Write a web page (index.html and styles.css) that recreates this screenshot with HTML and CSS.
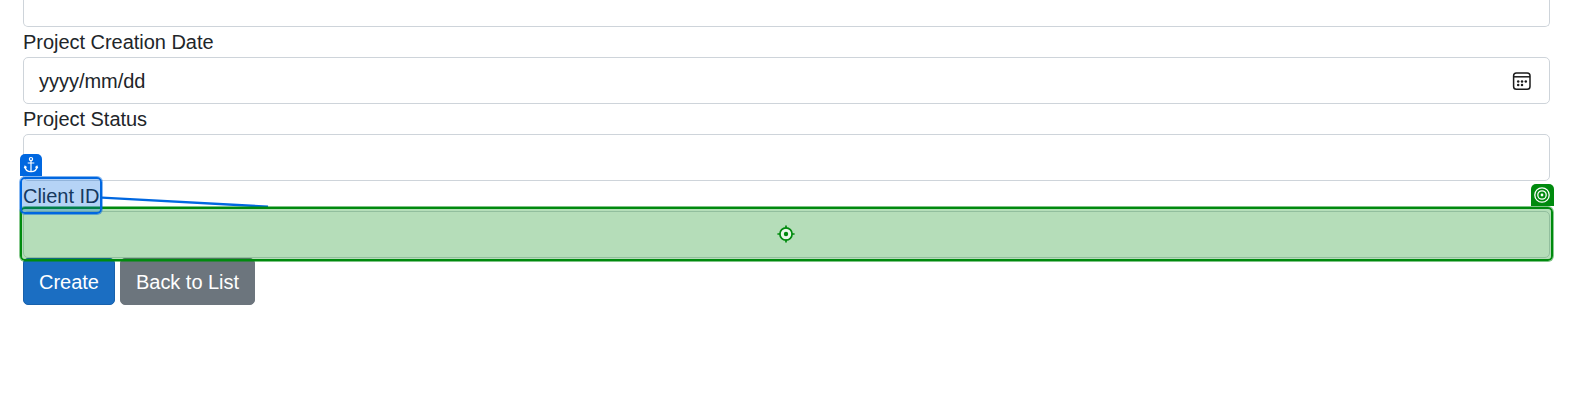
FILE: index.html
```html
<!DOCTYPE html>
<html lang="en">
<head>
<meta charset="utf-8">
<title>Create Project</title>
<link rel="stylesheet" href="styles.css">
</head>
<body>
<form class="form">
  <div class="control control-first"></div>
  <div class="label">Project Creation Date</div>
  <div class="control date">
    <span>yyyy/mm/dd</span>
    <svg class="calendar" width="20" height="20" viewBox="0 0 20 20" fill="none" stroke="#1b1b1b" stroke-width="1.5"><rect x="1.6" y="1.9" width="16.4" height="16.4" rx="2.8"/><path d="M1.6 5.8h16.4"/><g fill="#1b1b1b" stroke="none"><circle cx="6.2" cy="10.4" r="1.25"/><circle cx="10" cy="10.4" r="1.25"/><circle cx="13.8" cy="10.4" r="1.25"/><circle cx="6.2" cy="14" r="1.25"/><circle cx="10" cy="14" r="1.25"/></g></svg>
  </div>
  <div class="label">Project Status</div>
  <div class="control"></div>
  <div class="label">Client ID</div>
  <div class="control"></div>
  <div class="actions">
    <span class="btn primary">Create</span>
    <span class="btn secondary">Back to List</span>
  </div>
</form>
<svg class="connector" width="190" height="20" viewBox="90 190 190 20"><path d="M102 197.6L268 206.6" stroke="#0067e0" stroke-width="2.4"/></svg>
<div class="target">
  <svg class="crosshair" width="18" height="18" viewBox="0 0 18 18" fill="none" stroke="#008a0e" stroke-width="1.7"><circle cx="9" cy="9" r="6.1" fill="#e8f6e8"/><circle cx="9" cy="9" r="2.2" fill="#008a0e" stroke="none"/><path d="M9 .4v3M9 14.6v3M.4 9h3M14.6 9h3"/></svg>
</div>
<div class="anchor"></div>
<div class="badge anchor-badge">
  <svg width="16" height="18" viewBox="0 0 16 18" fill="none" stroke="#fff" stroke-width="1.2"><circle cx="8" cy="3.1" r="1.6"/><path d="M8 4.7v11M4.7 7h6.6M2 10.4c.2 3.1 2.6 5.3 6 5.3s5.8-2.2 6-5.3M1.3 12.2l.7-1.9 1.6 1.2M14.7 12.2l-.7-1.9-1.6 1.2"/></svg>
</div>
<div class="badge target-badge">
  <svg width="18" height="18" viewBox="0 0 18 18" fill="none" stroke="#fff" stroke-width="1.3"><circle cx="9" cy="9" r="7.2"/><circle cx="9" cy="9" r="4.2"/><circle cx="9" cy="9" r="1.4" fill="#fff" stroke="none"/></svg>
</div>
</body>
</html>
```
FILE: styles.css
```css
* { box-sizing: border-box; }
body {
  margin: 0;
  height: 419px;
  position: relative;
  overflow: hidden;
  background: #fff;
  color: #212529;
  font: 20px/30px "Liberation Sans", Arial, sans-serif;
  letter-spacing: -.03px;
}
.form { padding: 0 23px; }
.control {
  height: 47px;
  border: 1px solid #ced4da;
  border-radius: 5px;
  background: #fff;
}
.control-first { height: 27px; border-top: 0; border-radius: 0 0 5px 5px; }
.label { height: 30px; }
.date {
  display: flex;
  align-items: center;
  justify-content: space-between;
  padding: 0 17px 0 15px;
}
.calendar { display: block; }
.actions { display: flex; gap: 5px; }
.btn {
  height: 47px;
  padding: 8px 0;
  border: 1px solid #1861ac;
  border-radius: 5px;
  color: #fff;
  text-align: center;
  white-space: nowrap;
}
.primary { width: 92px; background: #1b6ec2; }
.secondary { width: 135px; background: #6c757d; border-color: #6c757d; }
.connector { position: absolute; left: 90px; top: 190px; }
.target, .anchor, .badge { position: absolute; }
.target {
  left: 20px;
  top: 207px;
  width: 1533px;
  height: 54px;
  display: flex;
  align-items: center;
  justify-content: center;
  border: 2px solid #008a0e;
  border-radius: 5px;
  background: rgba(0, 138, 14, .29);
  background-clip: padding-box;
  box-shadow: 0 0 0 .9px rgba(0, 138, 14, .5);
}
.anchor {
  left: 20px;
  top: 177px;
  width: 82px;
  height: 37px;
  border: 2px solid #0067e0;
  border-radius: 5px;
  background: rgba(0, 103, 224, .29);
  background-clip: padding-box;
  box-shadow: 0 0 0 .9px rgba(0, 103, 224, .5);
}
.crosshair { margin-right: 1px; }
.badge {
  display: flex;
  align-items: center;
  justify-content: center;
  width: 22px;
  height: 22px;
  border-radius: 5px 5px 0 0;
}
.anchor-badge { left: 20px; top: 154px; background: #0067e0; }
.target-badge { left: 1531px; top: 184px; width: 22.5px; background: #008a0e; }
```
